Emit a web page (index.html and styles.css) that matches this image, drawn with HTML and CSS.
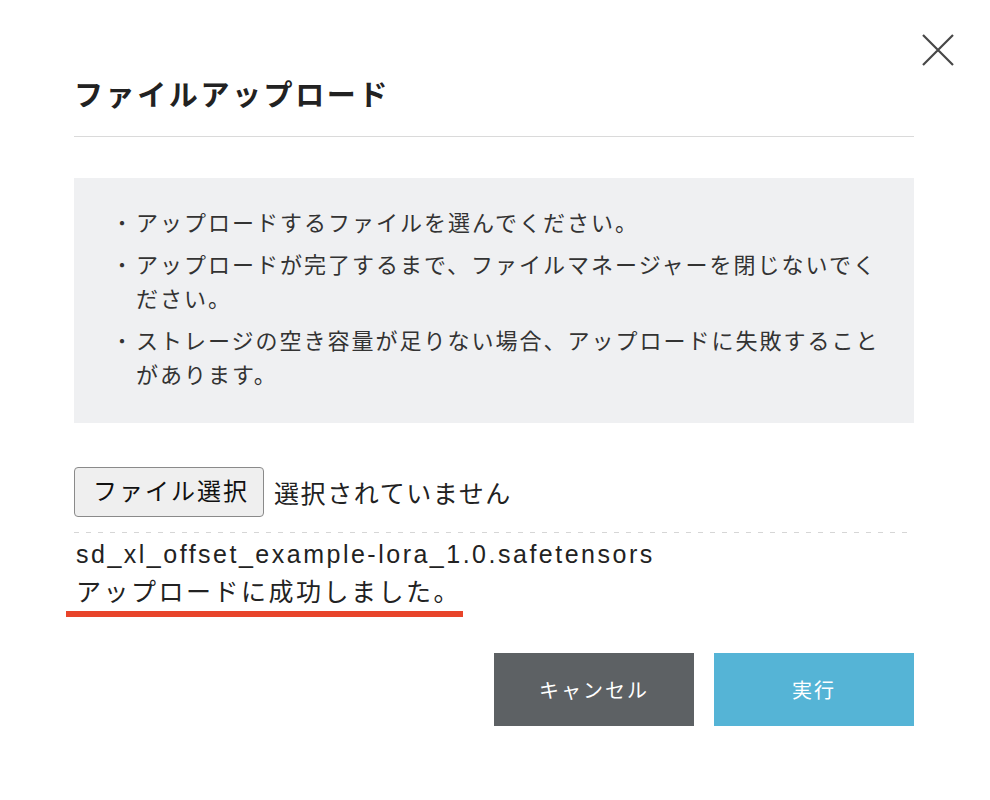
FILE: index.html
```html
<!DOCTYPE html>
<html lang="ja">
<head>
    <meta charset="UTF-8">
    <meta name="viewport" content="width=device-width, initial-scale=1.0">
    <title>ファイルアップロード</title>
    <link rel="stylesheet" href="styles.css">
</head>
<body>
    <div class="modal">
        <button class="modal-close" type="button" aria-label="閉じる">
            <svg width="34" height="32" viewBox="0 0 34 32">
                <path d="M2 1 L32 31 M32 1 L2 31" stroke="#474747" stroke-width="2.2" fill="none"/>
            </svg>
        </button>

        <h2 class="modal-title">ファイルアップロード</h2>

        <div class="notice">
            <ul class="notice-list">
                <li>アップロードするファイルを選んでください。</li>
                <li>アップロードが完了するまで、ファイルマネージャーを閉じないでください。</li>
                <li>ストレージの空き容量が足りない場合、アップロードに失敗することがあります。</li>
            </ul>
        </div>

        <div class="file-row">
            <label class="file-btn">ファイル選択</label>
            <span class="file-name">選択されていません</span>
        </div>

        <div class="upload-list">
            <div class="upload-file">sd_xl_offset_example-lora_1.0.safetensors</div>
            <div class="upload-status"><span class="marked">アップロードに成功しました。</span></div>
        </div>

        <div class="actions">
            <button class="btn btn-cancel" type="button">キャンセル</button>
            <button class="btn btn-submit" type="button">実行</button>
        </div>
    </div>
</body>
</html>
```

FILE: styles.css
```css
body {
    margin: 0;
    background-color: #fff;
    color: #333;
    font-family: "Liberation Sans", "Noto Sans CJK JP", sans-serif;
}
.modal {
    position: relative;
    width: 840px;
    padding: 76px 0 0 74px;
}
.modal-close {
    position: absolute;
    top: 34px;
    right: -41px;
    padding: 0;
    border: none;
    background: none;
    cursor: pointer;
    line-height: 0;
}
.modal-title {
    margin: 0;
    padding-bottom: 20px;
    border-bottom: 1px solid #dadada;
    color: #222;
    font-size: 29px;
    letter-spacing: 2.6px;
    line-height: 40px;
    font-weight: bold;
}
.notice {
    margin-top: 41px;
    padding: 29px 24px 30px 38px;
    background-color: #eff0f2;
}
.notice-list {
    margin: 0;
    padding: 0;
    list-style: none;
    font-size: 22px;
    letter-spacing: 2px;
    line-height: 34px;
}
.notice-list li {
    display: flex;
}
.notice-list li + li {
    margin-top: 8px;
}
.notice-list li::before {
    content: "・";
    flex: 0 0 24px;
    letter-spacing: 0;
    font-size: 20px;
}
.file-row {
    display: flex;
    align-items: center;
    margin-top: 44px;
    font-size: 25px;
}
.file-btn {
    box-sizing: border-box;
    width: 190px;
    height: 50px;
    padding-left: 18px;
    border: 1px solid #8a8a8a;
    border-radius: 4px;
    background-color: #efefef;
    color: #111;
    font-size: 24px;
    letter-spacing: 2px;
    line-height: 48px;
}
.file-name {
    margin-left: 10px;
    color: #222;
    letter-spacing: 1.6px;
}
.upload-list {
    margin-top: 15px;
    padding-top: 3px;
    background: repeating-linear-gradient(to right, #d6d6d6 0 5px, transparent 5px 12px) top left / 100% 1px no-repeat;
    font-size: 25px;
    letter-spacing: 0.1em;
    color: #222;
}
.upload-file {
    padding-left: 2px;
    line-height: 38px;
}
.upload-status {
    line-height: 38px;
}
.marked {
    display: inline-block;
    margin-left: -8px;
    padding: 0 2px 0 10px;
    border-bottom: 6px solid #e8442a;
}
.actions {
    display: flex;
    justify-content: flex-end;
    gap: 20px;
    margin-top: 36px;
}
.btn {
    width: 200px;
    height: 73px;
    border: none;
    color: #fff;
    font-family: inherit;
    font-size: 20px;
    letter-spacing: 2px;
    cursor: pointer;
}
.btn-cancel {
    background-color: #5d6164;
}
.btn-submit {
    background-color: #55b4d6;
}
```
